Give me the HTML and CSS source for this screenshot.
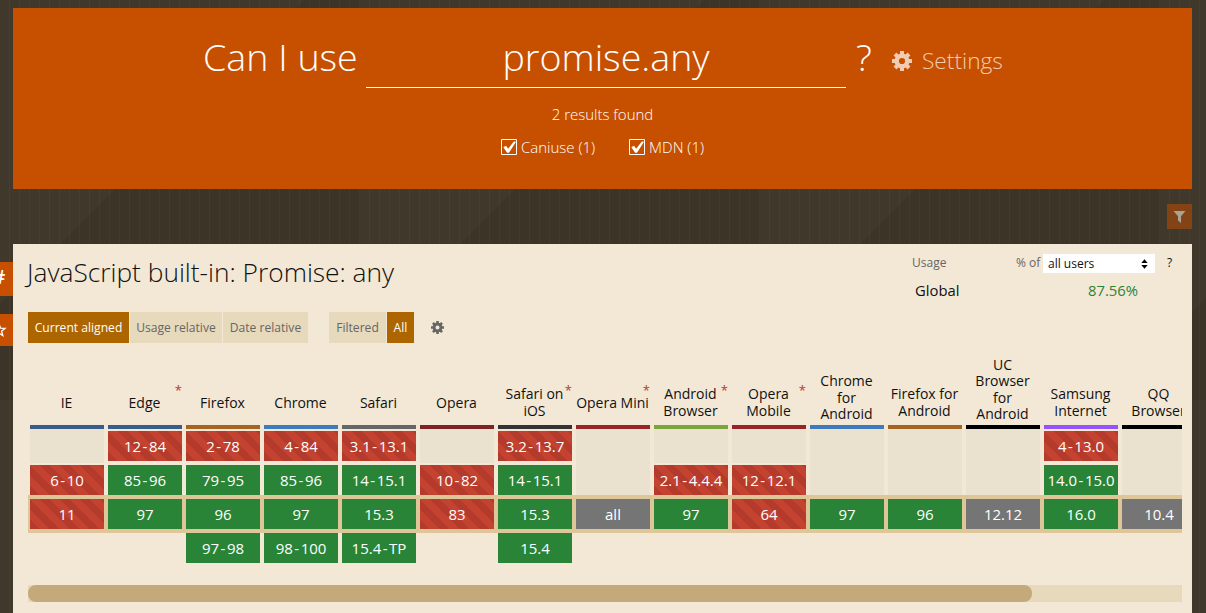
FILE: index.html
```
<!DOCTYPE html>
<html lang="en">
<head>
<meta charset="utf-8">
<title>Can I use... promise.any</title>
<link rel="stylesheet" href="styles.css">
</head>
<body>
<svg class="defs" width="0" height="0">
  <symbol id="gear" viewBox="0 0 20 20">
    <g fill="none" stroke="currentColor">
      <circle cx="10" cy="10" r="5.3" stroke-width="4.4"/>
      <path stroke-width="4" d="M10 0v4M10 16v4M0 10h4M16 10h4M3 3l2.8 2.8M14.2 14.2L17 17M3 17l2.8-2.8M14.2 5.8L17 3"/>
    </g>
  </symbol>
</svg>
<header class="search">
  <div class="search-row">
    <span class="big">Can I use</span>
    <span class="field">promise.any</span>
    <span class="big q">?</span>
    <a class="settings"><svg class="settings-icon"><use href="#gear"/></svg>Settings</a>
  </div>
  <div class="found">2 results found</div>
  <div class="checks">
    <label class="check"><svg class="box" viewBox="0 0 16 16"><path d="M.5.5h15v15H.5z" fill="none" stroke="#fff"/><path d="M2.3 8.2L5 6.8l2.2 3L12.8 2.4l2.2.4L8 13.8H6.2z" fill="#fff"/></svg>Caniuse (1)</label>
    <label class="check"><svg class="box" viewBox="0 0 16 16"><path d="M.5.5h15v15H.5z" fill="none" stroke="#fff"/><path d="M2.3 8.2L5 6.8l2.2 3L12.8 2.4l2.2.4L8 13.8H6.2z" fill="#fff"/></svg>MDN (1)</label>
  </div>
</header>
<div class="tools"><span class="filter"><svg width="13" height="12" viewBox="0 0 13 12"><path d="M.5 0h12L8 5.2V12L5 9.6V5.2z" fill="currentColor"/></svg></span></div>
<main class="feature">
  <span class="tab tab-hash">#</span>
  <span class="tab tab-star"><svg width="16" height="16" viewBox="0 0 16 16"><path d="M8 2l1.6 4.2 4.4.2-3.4 2.8 1.2 4.3L8 11.1l-3.8 2.4 1.2-4.3L2 6.4l4.4-.2z" fill="none" stroke="#fff" stroke-width="1.3"/></svg></span>
  <div class="top">
    <h1 class="title">JavaScript built-in: Promise: any</h1>
    <div class="usage">
      <div class="usage-head"><span class="usage-label">Usage</span><span class="of">% of</span><span class="select">all users<svg width="7" height="10" viewBox="0 0 7 10"><path d="M.3 4L3.5.3 6.7 4zM.3 6h6.4L3.5 9.7z"/></svg></span><span class="help">?</span></div>
      <div class="usage-row"><span>Global</span><span class="pct">87.56%</span></div>
    </div>
  </div>
  <div class="modes">
    <span class="mode on m1">Current aligned</span><span class="mode m2">Usage relative</span><span class="mode m3">Date relative</span>
    <span class="mode m4">Filtered</span><span class="mode on m5">All</span>
    <svg class="gear-small"><use href="#gear"/></svg>
  </div>
  <div class="table" id="table"></div>
  <div class="track"><div class="thumb"></div></div>
</main>
<script src="table.js"></script>
</body>
</html>
```
FILE: styles.css
```
* { box-sizing: border-box; }
body {
  margin: 0;
  padding: 8px 14px 0 13px;
  height: 613px;
  overflow: hidden;
  font-family: "Open Sans", "Noto Sans", sans-serif;
  font-size: 14px;
  color: #111;
  background-color: #40382a;
  background-image:
    repeating-linear-gradient(90deg, transparent 0 9px, rgba(255,255,255,.03) 9px 10px),
    linear-gradient(135deg, #40382a 243px, #3c3426 243.5px);
  background-size: auto, 400px 400px;
  background-position: 0 0, -40px 0;
}
.defs { position: absolute; }
.search { height: 181px; background: #c75000; color: #fff; }
.search-row { display: flex; height: 80px; padding: 21px 0 0 190px; align-items: flex-start; }
.big, .field { font-size: 37.6px; font-weight: 300; line-height: 56px; white-space: nowrap; }
.big { width: 163px; }
.field { width: 480px; height: 59px; border-bottom: 1px solid #fff; text-align: center; }
.q { width: 46px; padding-left: 10px; }
.settings { display: flex; align-items: center; height: 56px; margin-top: 3px; font-size: 22.7px; font-weight: 300; color: #f1cbb2; }
.settings-icon { width: 20px; height: 20px; margin: 2px 10px 0 0; }
.found { margin-top: 16px; line-height: 20px; font-size: 15px; text-align: center; font-weight: 300; }
.checks { display: flex; justify-content: center; gap: 34px; margin-top: 13px; font-size: 15px; font-weight: 300; }
.check { display: flex; align-items: center; line-height: 20px; }
.box { width: 16px; height: 16px; margin-right: 4px; }
.tools { display: flex; justify-content: flex-end; height: 55px; padding-top: 15px; }
.filter { display: flex; align-items: center; justify-content: center; width: 25px; height: 25px; background: #834314; color: #a8a297; }
.feature { position: relative; width: 1179px; height: 369px; padding: 0 10px 0 15px; background: #f3e8d6; }
.tab { position: absolute; left: -32px; width: 32px; background: #c75000; color: #fff; overflow: hidden; }
.tab-hash { top: 18px; height: 34px; padding-left: 12px; font-size: 19px; font-weight: 600; line-height: 30px; }
.tab-star { top: 70px; height: 32px; padding: 8px 0 0 10px; }
.top { display: flex; justify-content: space-between; height: 68px; }
.title { margin: 8px 0 0 -1px; font-size: 26.3px; line-height: 40px; font-weight: 300; white-space: nowrap; }
.usage { width: 270px; padding-top: 10px; }
.usage-head { display: flex; height: 19px; line-height: 18px; font-size: 12px; }
.usage-label { width: 104px; color: #666; }
.of { width: 27px; color: #666; }
.select { display: flex; justify-content: space-between; align-items: center; width: 112px; background: #fff; padding: 0 7px 0 5px; }
.help { padding-left: 12px; }
.usage-row { display: flex; justify-content: space-between; width: 226px; margin-top: 7px; padding-left: 3px; line-height: 20px; font-size: 14.8px; }
.pct { color: #2a8437; line-height: 21px; }
.modes { display: flex; height: 31px; font-size: 12.1px; line-height: 31px; color: #666; }
.mode { background: #e6d9bc; margin-right: 1px; text-align: center; white-space: nowrap; }
.on { background: #ad6500; color: #fff; }
.m1 { width: 101px; }
.m2 { width: 92px; }
.m3 { width: 85px; margin-right: 21px; }
.m4 { width: 57px; }
.m5 { width: 27px; }
.gear-small { width: 13px; height: 13px; margin: 9px 0 0 16px; }
.table { display: flex; height: 242px; overflow: hidden; }
.col { flex: 0 0 78px; position: relative; }
.name { display: flex; align-items: flex-end; justify-content: center; height: 86px; margin: 0 2px; padding: 0 1px 2px 0; text-align: center; line-height: 16.6px; border-bottom: 4px solid; }
.name span { display: flex; align-items: center; min-height: 40px; color: #111; white-space: pre; }
.note { position: absolute; top: 42px; right: 2px; line-height: 11px; font-size: 13px; color: #b43a2c; }
.past { display: flex; flex-direction: column; justify-content: flex-end; gap: 4px; height: 66px; margin: 0 2px; }
.blank { flex: 1; background: #eae1cf; margin-bottom: -2px; }
.blank:last-child { margin: 0; }
.now { padding: 4px 2px; background: #dfc698; }
.next { margin: 0 2px; }
.cell { height: 30px; line-height: 30px; text-align: center; color: #fff; white-space: nowrap; font-size: 15px; }
.dash { margin: 0 1.5px; }
.y { background: #2a8437; }
.u { background: #757575; }
.n { background: linear-gradient(45deg, #c44230 25%, #b43a2c 25% 50%, #c44230 50% 75%, #b43a2c 75%) 0 0 / 20px 20px; }
.track { height: 17px; background: #e6d9bc; }
.thumb { width: 1004px; height: 17px; border-radius: 8px; background: #c4aa7b; }
```
FILE: table.js
```
// [name, header colour, has note, past versions, current version, next version]
const browsers = [
  ['IE', '#385c8b', 0, ['', 'n6-10'], 'n11'],
  ['Edge', '#385c8b', 1, ['n12-84', 'y85-96'], 'y97'],
  ['Firefox', '#a66423', 0, ['n2-78', 'y79-95'], 'y96', 'y97-98'],
  ['Chrome', '#3f7abf', 0, ['n4-84', 'y85-96'], 'y97', 'y98-100'],
  ['Safari', '#666', 0, ['n3.1-13.1', 'y14-15.1'], 'y15.3', 'y15.4-TP'],
  ['Opera', '#7e2223', 0, ['', 'n10-82'], 'n83'],
  ['Safari on\niOS', '#333', 1, ['n3.2-13.7', 'y14-15.1'], 'y15.3', 'y15.4'],
  ['Opera Mini', '#962626', 1, [''], 'uall'],
  ['Android\nBrowser', '#7ba43c', 1, ['', 'n2.1-4.4.4'], 'y97'],
  ['Opera\nMobile', '#962626', 1, ['', 'n12-12.1'], 'n64'],
  ['Chrome\nfor\nAndroid', '#3f7abf', 0, [''], 'y97'],
  ['Firefox for\nAndroid', '#a66423', 0, [''], 'y96'],
  ['UC\nBrowser\nfor\nAndroid', '#000', 0, [''], 'u12.12'],
  ['Samsung\nInternet', '#9751ff', 0, ['n4-13.0', 'y14.0-15.0'], 'y16.0'],
  ['QQ\nBrowser', '#000', 0, [''], 'u10.4']
];
const cell = v => v
  ? `<div class="cell ${v[0]}">${v.slice(1).replace('-', '<span class="dash">-</span>')}</div>`
  : '<div class="blank"></div>';
document.getElementById('table').innerHTML = browsers.map(([name, color, note, past, now, next]) => `
  <div class="col">
    <div class="name" style="border-color:${color}"><span>${name}</span></div>
    ${note ? '<span class="note">*</span>' : ''}
    <div class="past">${past.map(cell).join('')}</div>
    <div class="now">${cell(now)}</div>
    ${next ? `<div class="next">${cell(next)}</div>` : ''}
  </div>`).join('');
```
